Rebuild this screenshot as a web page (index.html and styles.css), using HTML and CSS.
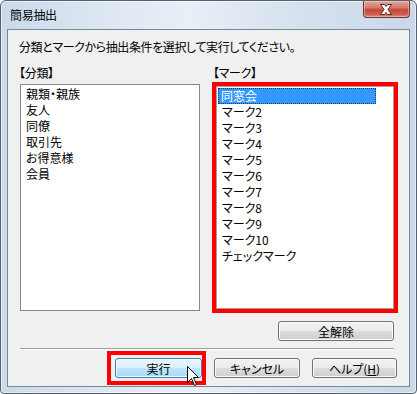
FILE: index.html
```html
<!DOCTYPE html>
<html lang="ja">
<head>
<meta charset="utf-8">
<title>簡易抽出</title>
<link rel="stylesheet" href="styles.css">
</head>
<body>
<div class="window">
  <div class="titlebar">
    <span class="title">簡易抽出</span>
    <div class="close">
      <svg width="47" height="17" viewBox="0 0 47 17">
        <path d="M18.5 3.5 H22.5 L24 5.5 L25.5 3.5 H29.5 L26 8.5 L29.5 13.5 H25.5 L24 11.5 L22.5 13.5 H18.5 L22 8.5 Z" fill="#ffffff" stroke="#5a2620" stroke-width="1" stroke-linejoin="round"/>
      </svg>
    </div>
  </div>
  <div class="client">
    <p class="prompt">分類とマークから抽出条件を選択して実行してください。</p>
    <div class="lists">
      <div class="col col-left">
        <div class="label">【分類】</div>
        <ul class="listbox listbox-left">
          <li>親類・親族</li>
          <li>友人</li>
          <li>同僚</li>
          <li>取引先</li>
          <li>お得意様</li>
          <li>会員</li>
        </ul>
      </div>
      <div class="col col-right">
        <div class="label">【マーク】</div>
        <div class="red-frame">
          <ul class="listbox listbox-right">
            <li class="selected">同窓会</li>
            <li>マーク2</li>
            <li>マーク3</li>
            <li>マーク4</li>
            <li>マーク5</li>
            <li>マーク6</li>
            <li>マーク7</li>
            <li>マーク8</li>
            <li>マーク9</li>
            <li>マーク10</li>
            <li>チェックマーク</li>
          </ul>
        </div>
      </div>
    </div>
    <div class="clear-row"><button class="btn btn-clear">全解除</button></div>
    <div class="sep"></div>
    <div class="actions">
      <div class="run-wrap">
        <button class="btn btn-run btn-hover">実行</button>
        <span class="red-ring"></span>
        <svg class="cursor" width="13" height="20" viewBox="0 0 13 20">
          <path d="M0.5 0.5 L0.5 16.5 L4.5 12.5 L7.5 19.5 L9.5 18.5 L6.5 11.5 L11.5 11.5 Z" fill="#ffffff" stroke="#000000" stroke-width="1" stroke-linejoin="miter"/>
        </svg>
      </div>
      <button class="btn btn-cancel">キャンセル</button>
      <button class="btn btn-help">ヘルプ(<u>H</u>)</button>
    </div>
  </div>
</div>
</body>
</html>
```

FILE: styles.css
```css
html, body {
  margin: 0;
  padding: 0;
  background: #ffffff;
}

body {
  font-family: "Noto Sans CJK JP", "Noto Sans", sans-serif;
  font-size: 12px;
  font-feature-settings: "palt";
  color: #000000;
}

.window {
  box-sizing: border-box;
  width: 417px;
  height: 394px;
  border: 1px solid #57626f;
  border-radius: 6px 6px 4px 4px;
  background: linear-gradient(to right, #cbd9ea 0%, #dde7f3 25%, #e9eff7 45%, #d6e2ef 70%, #c9d8ea 100%);
  box-shadow: inset 0 0 0 1px rgba(255, 255, 255, 0.55);
  padding: 0 6px 7px 6px;
  display: flex;
  flex-direction: column;
}

.titlebar {
  height: 28px;
  display: flex;
  justify-content: space-between;
  align-items: flex-start;
}

.title {
  padding-left: 3px;
  line-height: 28px;
  font-size: 12px;
  color: #000000;
  letter-spacing: -0.3px;
}

.close {
  width: 47px;
  height: 17px;
  box-sizing: border-box;
  border: 1px solid #6e3530;
  border-top: none;
  border-radius: 0 0 4px 4px;
  background: linear-gradient(to bottom, #e4a89e 0%, #d77a6c 40%, #c4493c 55%, #cc5a4c 80%, #dd8a7c 100%);
  box-shadow: inset 0 0 0 1px rgba(255, 220, 210, 0.45);
  display: flex;
  align-items: center;
  justify-content: center;
}

.close svg {
  display: block;
  margin-left: -2px;
}

.client {
  flex: 1;
  box-sizing: border-box;
  border: 1px solid #7a8797;
  background: #f0f0f0;
  padding: 10px 0 8px 12px;
  display: flex;
  flex-direction: column;
}

.prompt {
  margin: 0 0 0 -1px;
  line-height: 14px;
  height: 14px;
  font-size: 12px;
  letter-spacing: -0.4px;
}

.lists {
  display: flex;
  gap: 12px;
  margin-top: 12px;
}

.col {
  display: flex;
  flex-direction: column;
}

.col-left {
  width: 180px;
}

.col-right {
  width: 186px;
}

.label {
  line-height: 14px;
  height: 14px;
  margin-left: -1px;
  letter-spacing: -0.3px;
}

.col-right .label {
  margin-left: 1px;
}

.listbox {
  list-style: none;
  margin: 0;
  padding: 1px;
  box-sizing: border-box;
  background: #ffffff;
  border: 1px solid #828790;
}

.listbox li {
  height: 16px;
  line-height: 16px;
  padding-left: 4px;
  white-space: nowrap;
}

.listbox-left {
  margin-top: 4px;
  height: 227px;
}

.red-frame {
  margin-top: 2px;
  border: 4px solid #ff0000;
  height: 231px;
  box-sizing: border-box;
}

.listbox-right {
  height: 223px;
  border-color: #a0a0a0;
}

.listbox-right li.selected {
  width: 158px;
  box-sizing: border-box;
  background: #3399ff;
  color: #ffffff;
  outline: 1px dotted #1a3f6a;
  outline-offset: -1px;
  padding-left: 3px;
}

.clear-row {
  display: flex;
  justify-content: flex-end;
  padding-right: 15px;
  margin-top: 8px;
}

.btn {
  font-family: inherit;
  font-size: 12px;
  font-feature-settings: "palt";
  color: #000000;
  height: 20px;
  padding: 0;
  box-sizing: border-box;
  border: 1px solid #707070;
  border-radius: 3px;
  background: linear-gradient(to bottom, #f2f2f2 0%, #ebebeb 50%, #dddddd 50%, #cfcfcf 100%);
  box-shadow: inset 0 0 0 1px #fbfbfb;
  line-height: 17px;
}

.btn-clear {
  width: 116px;
}

.btn-hover {
  border-color: #3c7fb1;
  background: linear-gradient(to bottom, #eaf6fd 0%, #d9f0fc 50%, #bee6fd 50%, #a7d9f5 100%);
  box-shadow: inset 0 0 0 1px #f4fbff;
}

.btn-help u {
  text-decoration: underline;
  text-underline-offset: 1px;
}

.sep {
  margin: 7px 15px 0 0;
  height: 0;
  border-top: 1px solid #a0a0a0;
  border-bottom: 1px solid #ffffff;
}

.actions {
  display: flex;
  justify-content: flex-end;
  gap: 12px;
  padding-right: 12px;
  margin-top: 8px;
}

.run-wrap {
  position: relative;
  display: flex;
}

.btn-run {
  width: 87px;
}

.btn-cancel {
  width: 86px;
}

.btn-help {
  width: 85px;
}

.red-ring {
  position: absolute;
  left: -8px;
  right: -4px;
  top: -7px;
  bottom: -7px;
  border: 4px solid #ff0000;
  pointer-events: none;
}

.cursor {
  position: absolute;
  left: 72px;
  top: 8px;
}
```
